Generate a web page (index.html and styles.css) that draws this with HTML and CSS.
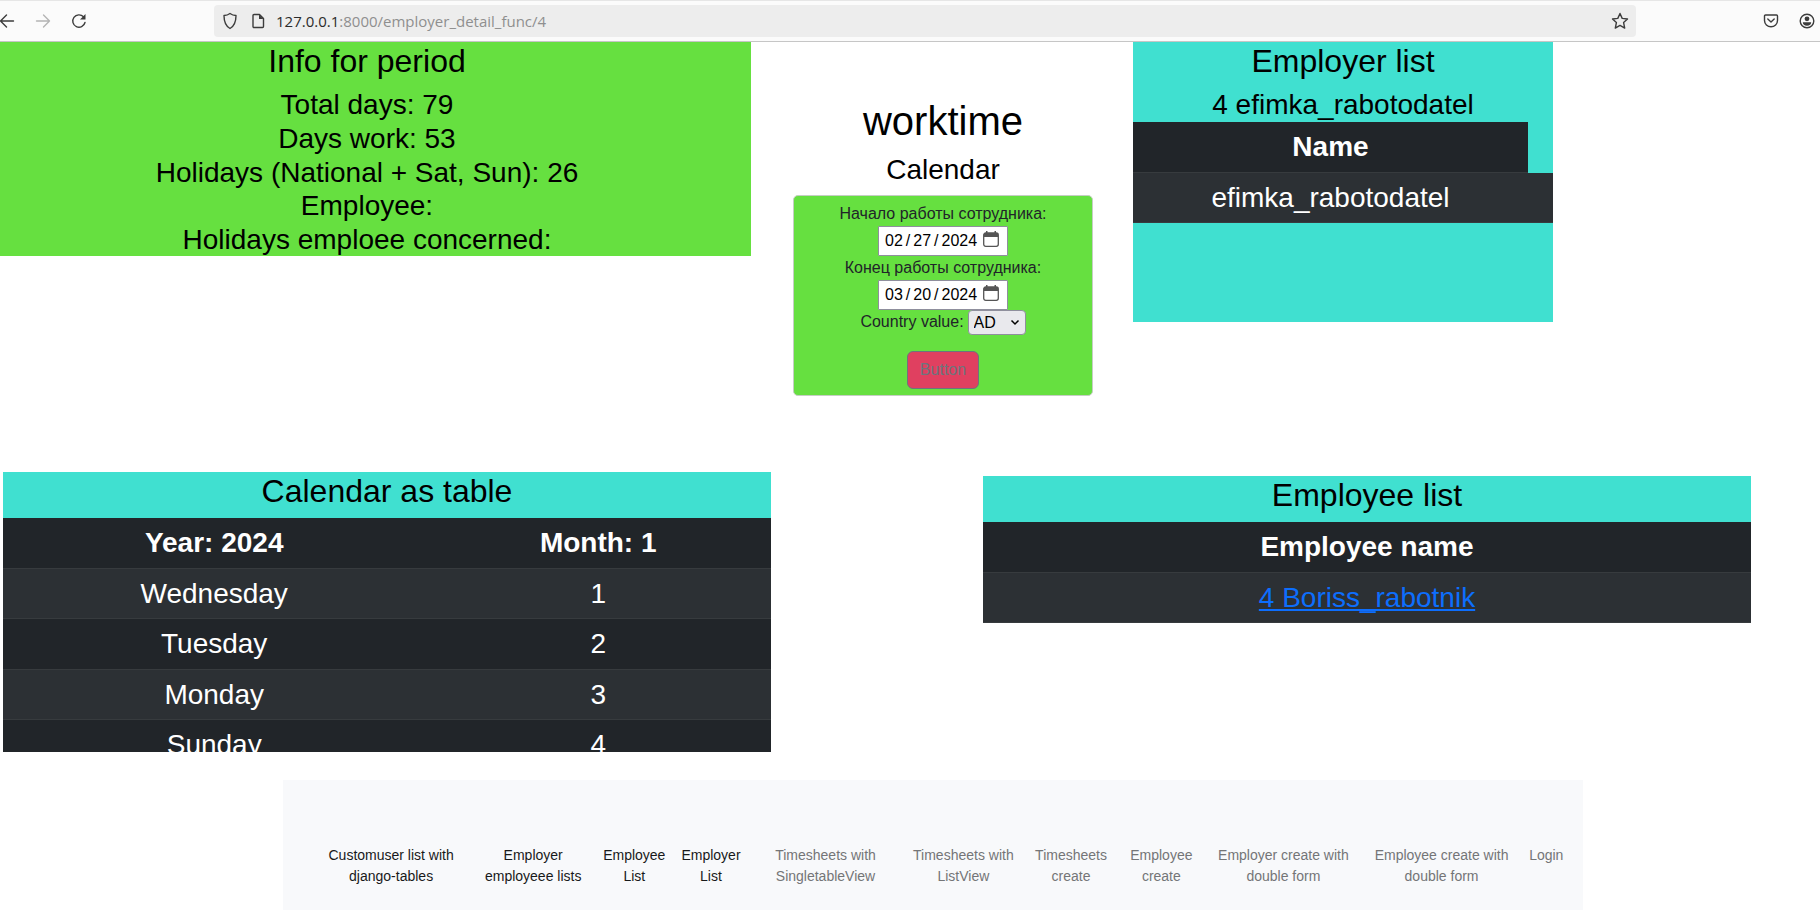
FILE: index.html
```html
<!DOCTYPE html>
<html lang="en">
<head>
<meta charset="utf-8">
<title>worktime</title>
<link rel="stylesheet" href="styles.css">
</head>
<body>
<header class="toolbar">
  <div class="nav-buttons">
    <button class="icon-btn" type="button" aria-label="Back"><svg width="16" height="16" viewBox="0 0 16 16"><path d="M14.500 8H1.500M7.500 2L1.500 8l6 6"/></svg></button>
    <button class="icon-btn icon-btn-off" type="button" aria-label="Forward" disabled><svg width="16" height="16" viewBox="0 0 16 16"><path d="M1.500 8h13M8.500 2l6 6-6 6"/></svg></button>
    <button class="icon-btn" type="button" aria-label="Reload"><svg width="16" height="16" viewBox="0 0 16 16"><path d="M14 9.500A6.200 6.200 0 1 1 12.500 3.800"/><path class="fill" d="M14.500 1v5.500H9z"/></svg></button>
  </div>
  <div class="address">
    <svg width="16" height="18" viewBox="0 0 16 18"><path d="M8 1.500c2 1.500 4 2 6 2 0 6-1.500 10.500-6 13C3.500 14 2 9.500 2 3.500c2 0 4-.5 6-2z"/></svg>
    <svg width="16" height="16" viewBox="0 0 16 16"><path d="M4 1.500h5.500l4 4v8a1 1 0 0 1-1 1H4a1 1 0 0 1-1-1v-11a1 1 0 0 1 1-1z"/><path class="fill" d="M9 1.500v4.500h4.500z"/></svg>
    <div class="url" role="textbox" aria-label="Address"><span class="host">127.0.0.1</span>:8000/employer_detail_func/4</div>
    <button class="icon-btn" type="button" aria-label="Bookmark"><svg width="18" height="18" viewBox="0 0 18 18"><path d="M9 1.500l2.200 4.900 5.300.6-3.900 3.600 1.100 5.500L9 13.400l-4.700 2.700 1.100-5.500L1.500 7l5.300-.6z"/></svg></button>
  </div>
  <div class="account-buttons">
    <button class="icon-btn" type="button" aria-label="Save to Pocket"><svg width="16" height="16" viewBox="0 0 16 16"><path d="M2.500 2h11a1 1 0 0 1 1 1v4.500a6.500 6.200 0 0 1-13 0V3a1 1 0 0 1 1-1zM4.800 6L8 9l3.200-3"/></svg></button>
    <button class="icon-btn" type="button" aria-label="Account"><svg width="16" height="16" viewBox="0 0 16 16"><circle cx="8" cy="8" r="6.800"/><circle class="fill" cx="8" cy="5.800" r="2.400"/><path class="fill" d="M3.800 9.200h8.400c0 2.200-1.700 3.600-4.200 3.600s-4.200-1.400-4.200-3.600z"/></svg></button>
  </div>
</header>

<main>
  <div class="row-top">
    <section class="panel info">
      <h2>Info for period</h2>
      <p>Total days: 79</p>
      <p>Days work: 53</p>
      <p>Holidays (National + Sat, Sun): 26</p>
      <p>Employee:</p>
      <p>Holidays emploee concerned:</p>
    </section>

    <section class="center">
      <h1>worktime</h1>
      <h3>Calendar</h3>
      <form class="card">
        <label for="start">Начало работы сотрудника:</label>
        <input class="date" id="start" type="date" value="2024-02-27">
        <label for="end">Конец работы сотрудника:</label>
        <input class="date" id="end" type="date" value="2024-03-20">
        <div class="country">
          <label for="country">Country value:</label>
          <select id="country"><option>AD</option></select>
        </div>
        <button class="submit" type="button">Button</button>
      </form>
    </section>

    <section class="panel employers">
      <h2>Employer list</h2>
      <p>4 efimka_rabotodatel</p>
      <table>
        <thead><tr><th scope="col">Name</th></tr></thead>
        <tbody><tr><td>efimka_rabotodatel</td><td class="spare"></td></tr></tbody>
      </table>
    </section>
  </div>

  <div class="row-tables">
    <section class="panel calendar">
      <h2>Calendar as table</h2>
      <table>
        <thead><tr><th class="day" scope="col">Year: 2024</th><th scope="col">Month: 1</th></tr></thead>
        <tbody>
          <tr><td>Wednesday</td><td>1</td></tr>
          <tr><td>Tuesday</td><td>2</td></tr>
          <tr><td>Monday</td><td>3</td></tr>
          <tr><td>Sunday</td><td>4</td></tr>
        </tbody>
      </table>
    </section>

    <section class="panel employees">
      <h2>Employee list</h2>
      <table>
        <thead><tr><th scope="col">Employee name</th></tr></thead>
        <tbody><tr><td><a href="#">4 Boriss_rabotnik</a></td></tr></tbody>
      </table>
    </section>
  </div>
</main>

<nav class="footer">
  <a class="active" href="#">Customuser list with django-tables</a>
  <a class="active" href="#">Employer employeee lists</a>
  <a class="active" href="#">Employee List</a>
  <a class="active" href="#">Employer List</a>
  <a href="#">Timesheets with SingletableView</a>
  <a href="#">Timesheets with ListView</a>
  <a href="#">Timesheets create</a>
  <a href="#">Employee create</a>
  <a href="#">Employer create with double form</a>
  <a href="#">Employee create with double form</a>
  <a href="#">Login</a>
</nav>
</body>
</html>
```

FILE: styles.css
```css
* { box-sizing: border-box; }

html, body { height: 100%; }

body {
  margin: 0;
  display: flex;
  flex-direction: column;
  overflow: hidden;
  background: #fff;
  color: #000;
  font-family: "Liberation Sans", Arial, sans-serif;
  font-size: 28px;
  line-height: 1.2;
}

h1, h2, h3 { margin: 0 0 8px; font-weight: 400; }
h1 { font-size: 40px; }
h2 { font-size: 32px; }
h3 { font-size: 28px; }
p { margin: 0; }

/* Browser toolbar */
.toolbar {
  flex: none;
  display: flex;
  align-items: center;
  height: 42px;
  background: #fbfbfb;
  border-top: 1px solid #e6e6e6;
  border-bottom: 1px solid #c6c6c6;
}

.toolbar svg {
  display: block;
  flex: none;
  fill: none;
  stroke: #3c3c3c;
  stroke-width: 1.4;
  stroke-linejoin: round;
  stroke-linecap: round;
}

.toolbar svg .fill { fill: #3c3c3c; stroke: none; }

.icon-btn { padding: 0; border: 0; background: none; }
.icon-btn-off svg { stroke: #b4b4b4; }

.nav-buttons { display: flex; gap: 20px; width: 214px; margin-left: -1px; }

.address {
  flex: 1;
  display: flex;
  align-items: center;
  gap: 12px;
  height: 32px;
  margin-left: 1px;
  padding: 0 7px 0 8px;
  border-radius: 4px;
  background: #ededed;
}

.url {
  flex: 1;
  margin-left: -2px;
  color: #8f8f8f;
  font: 15px/20px "Open Sans", "Noto Sans", sans-serif;
}

.host { color: #2b2b2b; }

.account-buttons {
  display: flex;
  justify-content: flex-end;
  gap: 20px;
  width: 184px;
  padding-right: 5px;
}

/* Panels */
.row-top {
  display: grid;
  grid-template-columns: 751fr 382fr 420fr 267fr;
  align-items: start;
  text-align: center;
}

.row-tables {
  display: grid;
  grid-template-columns: 768fr 212fr 768fr 69fr;
  align-items: start;
  margin-top: 76px;
  padding-left: 3px;
  text-align: center;
}

.panel { background: #40e0d0; }
.info { padding-right: 17px; background: #66e040; }
.employers { height: 280px; }
.calendar { height: 280px; overflow: hidden; }
.employees { grid-column: 3; margin-top: 4px; }

.center { padding: 55px 0 0 2px; }

.card {
  display: flex;
  flex-direction: column;
  align-items: center;
  width: 300px;
  margin: 0 auto;
  padding: 6px 5px;
  border: 1px solid #c5cec3;
  border-radius: 5px;
  background: #66e040;
  color: #212529;
  font-size: 16px;
  line-height: 24px;
}

.date {
  width: 130px;
  height: 30px;
  padding: 0 8px 0 5px;
  border: 1px solid #8f8f9d;
  border-radius: 1px;
  background: #fff;
  color: #000;
  font: 16px/24px "Liberation Sans", Arial, sans-serif;
}

.date::-webkit-datetime-edit { padding: 0; }
.date::-webkit-datetime-edit-text { padding: 0 2px; }

.date::-webkit-calendar-picker-indicator {
  width: 16px;
  height: 16px;
  margin: 0 0 3px;
  padding: 0;
  background: url("data:image/svg+xml,%3Csvg xmlns='http://www.w3.org/2000/svg' viewBox='0 0 16 16'%3E%3Crect x='.7' y='2' width='14.600' height='13.300' rx='2' fill='none' stroke='%23555' stroke-width='1.300'/%3E%3Cpath d='M1 2h14v4H1zM3 0h1.500v3H3zM11.500 0H13v3h-1.500z' fill='%23555'/%3E%3C/svg%3E") center / 16px 16px no-repeat;
}

.country { display: flex; align-items: center; gap: 4px; }

.country select {
  width: 58px;
  height: 25px;
  padding: 0 5px;
  appearance: none;
  border: 1px solid #8f8f9d;
  border-radius: 4px;
  background: #e9e9ed url("data:image/svg+xml,%3Csvg xmlns='http://www.w3.org/2000/svg' viewBox='0 0 10 10'%3E%3Cpath d='M1.500 3.500L5 7l3.500-3.500' fill='none' stroke='%23000' stroke-width='1.500'/%3E%3C/svg%3E") right 5px center / 10px 10px no-repeat;
  color: #000;
  font: 16px "Liberation Sans", Arial, sans-serif;
}

.submit {
  margin-top: 16px;
  padding: 6px 12px;
  border: 1px solid #6c757d;
  border-radius: 6px;
  background: #e04060;
  color: #6c757d;
  font: 16px/24px "Liberation Sans", Arial, sans-serif;
}

/* Tables */
table { width: 100%; border-collapse: separate; border-spacing: 0; color: #fff; }

th, td {
  padding: 8px;
  border-bottom: 1px solid #373b3e;
  background: #212529;
}

tbody tr:nth-child(odd) td { background: #2c3034; }
.spare { width: 25px; }
.day { width: 55%; }
td a { color: #0d6efd; }

/* Footer links */
.footer {
  flex: 1;
  display: flex;
  align-items: flex-start;
  margin: 28px 13% 0 283px;
  padding: 57px 12px 0 28px;
  background: #f8f9fb;
  text-align: center;
  font-size: 14px;
  line-height: 21px;
}

.footer a { padding: 8px; color: #747577; text-decoration: none; }
.footer .active { color: #18191a; }
```
